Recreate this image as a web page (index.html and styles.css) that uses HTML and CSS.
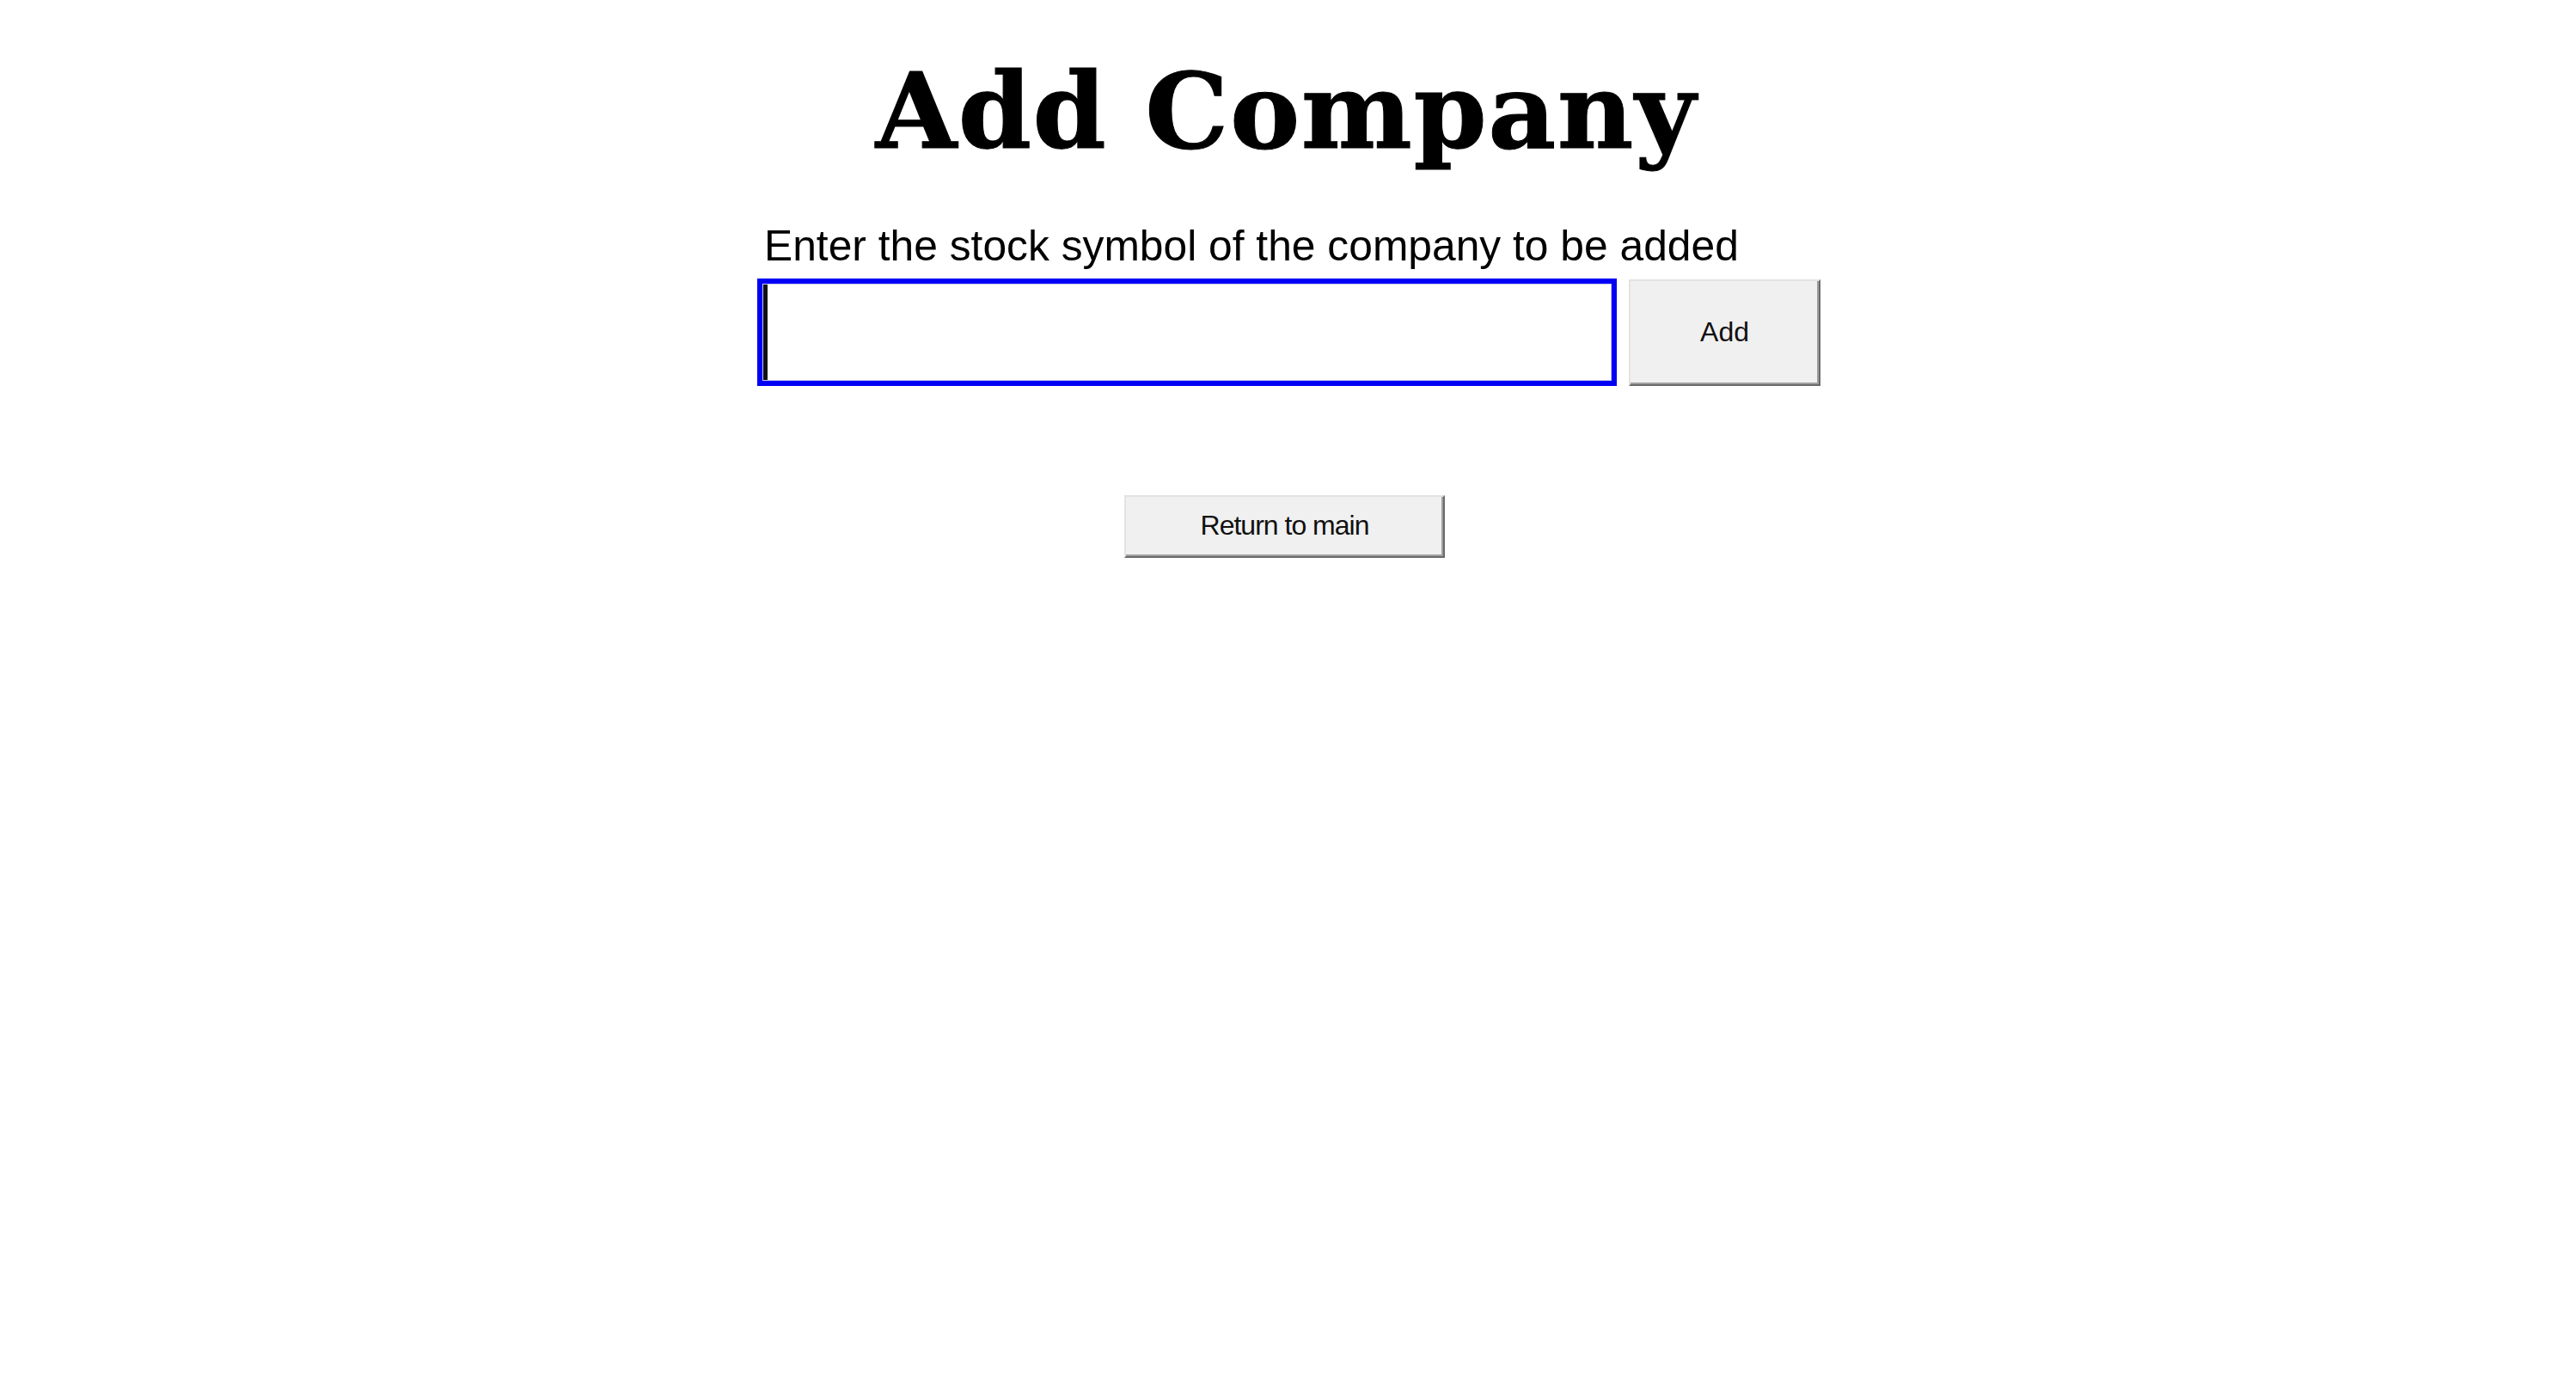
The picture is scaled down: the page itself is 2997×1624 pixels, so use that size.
FILE: index.html
```html
<!DOCTYPE html>
<html lang="en">
<head>
<meta charset="utf-8">
<title>Add Company</title>
<link rel="stylesheet" href="styles.css">
</head>
<body>
<main class="page">
  <h1 class="title">Add Company</h1>
  <section class="form">
    <div class="label">Enter the stock symbol of the company to be added</div>
    <div class="row">
      <div class="field"><span class="caret"></span></div>
      <div class="btn btn-add">Add</div>
    </div>
  </section>
  <div class="return-wrap">
    <div class="btn btn-return">Return to main</div>
  </div>
</main>
</body>
</html>
```
FILE: styles.css
```css
html, body {
  margin: 0;
  padding: 0;
  background: #ffffff;
}
.page {
  width: 2997px;
  min-height: 1624px;
  display: flex;
  flex-direction: column;
  align-items: center;
}
.title {
  margin: 68px 0 0 0;
  padding-right: 4px;
  font-family: "DejaVu Serif", "Liberation Serif", serif;
  font-weight: bold;
  font-size: 122px;
  line-height: 122px;
  letter-spacing: 1.5px;
  color: #000;
  white-space: nowrap;
  -webkit-text-stroke: 1px #000;
}
.form {
  margin-top: 71px;
  width: 1237px;
  display: flex;
  flex-direction: column;
  margin-left: 2px;
}
.label {
  font-family: "Liberation Sans", Arial, sans-serif;
  font-size: 49.75px;
  line-height: 50px;
  color: #000;
  padding-left: 8px;
  white-space: nowrap;
}
.row {
  margin-top: 13px;
  display: flex;
  gap: 14px;
  align-items: flex-start;
}
.field {
  box-sizing: border-box;
  width: 1000px;
  height: 125px;
  border: 6px solid #0000f5;
  box-shadow: inset 0 0 0 1px #c8c8ee;
  background: #fff;
  display: flex;
  align-items: center;
  padding-left: 1px;
}
.caret {
  display: block;
  width: 5px;
  height: 111px;
  background: #111;
}
.btn {
  box-sizing: border-box;
  background: #f0f0f0;
  border-top: 2px solid #e3e3e3;
  border-left: 2px solid #e3e3e3;
  border-right: 2px solid #6a6a6a;
  border-bottom: 2px solid #6a6a6a;
  box-shadow: inset -2px -2px 0 #a0a0a0;
  font-family: "Liberation Sans", Arial, sans-serif;
  color: #111;
  display: flex;
  align-items: center;
  justify-content: center;
}
.btn-add {
  width: 223px;
  height: 124px;
  margin-top: 1px;
  font-size: 32px;
  padding-bottom: 2px;
}
.return-wrap {
  margin-top: 127px;
  padding-right: 8px;
}
.btn-return {
  width: 373px;
  height: 73px;
  font-size: 32px;
  letter-spacing: -1px;
  padding-bottom: 2px;
}
```
